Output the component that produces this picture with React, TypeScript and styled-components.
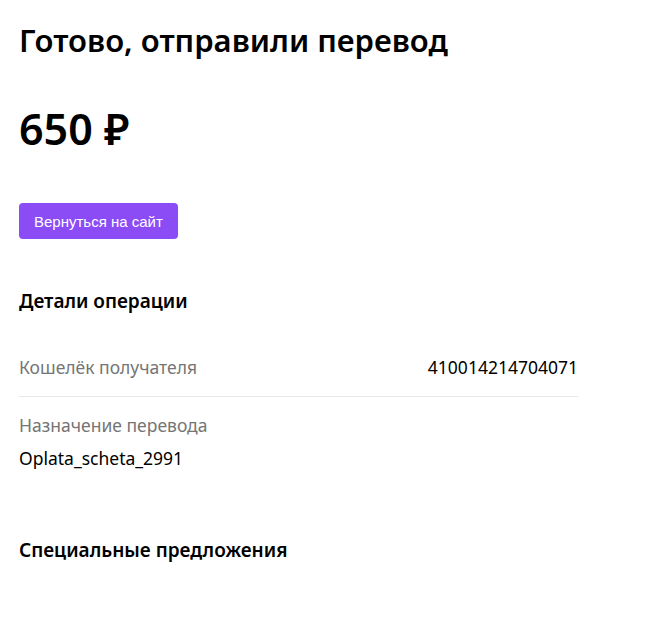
import React, { FC } from 'react';
import styled, { createGlobalStyle } from 'styled-components';

const GlobalStyle = createGlobalStyle`
  body {
    margin: 0;
    background: #fff;
    font-family: 'Noto Sans', 'Liberation Sans', sans-serif;
    color: #000;
  }
`;

const Page = styled.main`
  padding: 20px 19px 40px;
  width: 559px;
`;

const Title = styled.h1`
  font-size: 31px;
  font-weight: 600;
  line-height: 40px;
  margin: 0;
`;

const Amount = styled.div`
  font-size: 43px;
  font-weight: 600;
  line-height: 48px;
  margin-top: 45px;
`;

const BackButton = styled.button`
  margin-top: 50px;
  height: 36px;
  padding: 0 15px;
  border: none;
  border-radius: 4px;
  background: #8b4cf6;
  color: #fff;
  font-family: 'Liberation Sans', Arial, sans-serif;
  font-size: 15px;
  cursor: pointer;
`;

const SectionTitle = styled.h2<{ $gap: number }>`
  font-size: 19px;
  font-weight: 600;
  line-height: 24px;
  margin: ${({ $gap }) => $gap}px 0 0;
`;

const Details = styled.div`
  margin-top: 30px;
`;

const Row = styled.div`
  display: flex;
  justify-content: space-between;
  align-items: center;
  padding: 12px 0 17px;
  border-bottom: 1px solid #e8e8e8;
`;

const Label = styled.span`
  font-size: 17.5px;
  color: #757575;
  line-height: 24px;
`;

const Value = styled.span`
  font-size: 17.5px;
  line-height: 24px;
`;

const Stack = styled.div`
  display: flex;
  flex-direction: column;
  gap: 9px;
  padding-top: 16px;
`;

interface DetailProps {
  label: string;
  value: string;
}

const InlineDetail: FC<DetailProps> = ({ label, value }) => (
  <Row>
    <Label>{label}</Label>
    <Value>{value}</Value>
  </Row>
);

const StackedDetail: FC<DetailProps> = ({ label, value }) => (
  <Stack>
    <Label>{label}</Label>
    <Value>{value}</Value>
  </Stack>
);

const App: FC = () => (
  <Page>
    <GlobalStyle />
    <Title>Готово, отправили перевод</Title>
    <Amount>650 ₽</Amount>
    <BackButton>Вернуться на сайт</BackButton>
    <SectionTitle $gap={50}>Детали операции</SectionTitle>
    <Details>
      <InlineDetail label="Кошелёк получателя" value="410014214704071" />
      <StackedDetail label="Назначение перевода" value="Oplata_scheta_2991" />
    </Details>
    <SectionTitle $gap={68}>Специальные предложения</SectionTitle>
  </Page>
);

export default App;
